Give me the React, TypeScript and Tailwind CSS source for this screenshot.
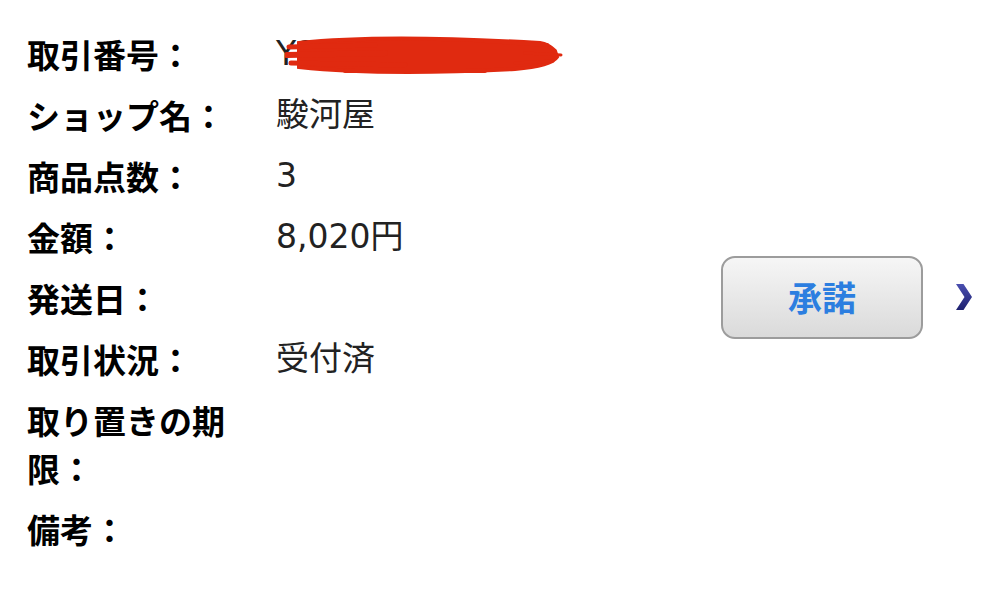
import React from "react";

const font = { fontFamily: '"Noto Sans CJK JP", "Noto Sans", sans-serif' };
const valueFont = { fontFamily: '"DejaVu Sans", "Noto Sans CJK JP", sans-serif' };

const rows: { label: string; value?: React.ReactNode }[] = [
  { label: "取引番号：", value: "redact" },
  { label: "ショップ名：", value: "駿河屋" },
  { label: "商品点数：", value: "3" },
  { label: "金額：", value: "8,020円" },
  { label: "発送日：" },
  { label: "取引状況：", value: "受付済" },
  { label: "取り置きの期限：" },
  { label: "備考：" },
];

function Redacted() {
  return (
    <span className="relative inline-block">
      Y2
      <svg
        className="absolute left-[9px] top-[3px]"
        width="280"
        height="44"
        viewBox="0 0 280 44"
      >
        <g fill="#e02a10" stroke="#e02a10" strokeLinecap="round">
          <path d="M14 10 C 70 4, 150 4, 255 10 C 262 11, 266 14, 270 18 L 272 24 C 268 30, 255 34, 230 36 C 150 40, 70 40, 14 34 Z" strokeWidth="4" />
          <path d="M4 14 L 90 12" strokeWidth="5" />
          <path d="M2 22 L 100 20" strokeWidth="6" />
          <path d="M6 30 L 120 32" strokeWidth="5" />
          <path d="M200 8 L 262 12" strokeWidth="4" />
          <path d="M240 20 L 276 22" strokeWidth="3" />
          <path d="M230 30 L 268 28" strokeWidth="3" />
          <path d="M60 38 L 200 38" strokeWidth="4" />
        </g>
      </svg>
    </span>
  );
}

export default function App() {
  return (
    <div className="w-[999px] h-[592px] bg-white overflow-hidden" style={font}>
      <div className="flex pt-[23px] pl-[27px]">
        <div className="flex flex-col w-[680px]">
          {rows.map((r) => (
            <div key={r.label} className="flex py-[6.5px] text-[33px] leading-[48px]">
              <div className="w-[220px] font-bold text-black">{r.label}</div>
              <div className="ml-[29px] text-[#222]" style={valueFont}>
                {r.value === "redact" ? <Redacted /> : r.value}
              </div>
            </div>
          ))}
        </div>
        <div className="flex items-center ml-[14px] pt-[12px]">
          <button
            className="w-[202px] h-[83px] rounded-[14px] border-2 border-[#9c9c9c] bg-gradient-to-b from-[#f6f6f6] to-[#dadada] text-[#2c7ee0] font-bold text-[34px] leading-none"
            style={font}
          >
            承諾
          </button>
          <svg className="ml-[32px]" width="18" height="28" viewBox="0 0 18 28">
            <defs>
              <linearGradient id="cg" x1="0" y1="0" x2="0" y2="1">
                <stop offset="0" stopColor="#4a4fb0" />
                <stop offset="1" stopColor="#1e2170" />
              </linearGradient>
            </defs>
            <path d="M1 1 L 8.5 1 L 17 14 L 8.5 27 L 1 27 L 9.5 14 Z" fill="url(#cg)" />
          </svg>
        </div>
      </div>
    </div>
  );
}
